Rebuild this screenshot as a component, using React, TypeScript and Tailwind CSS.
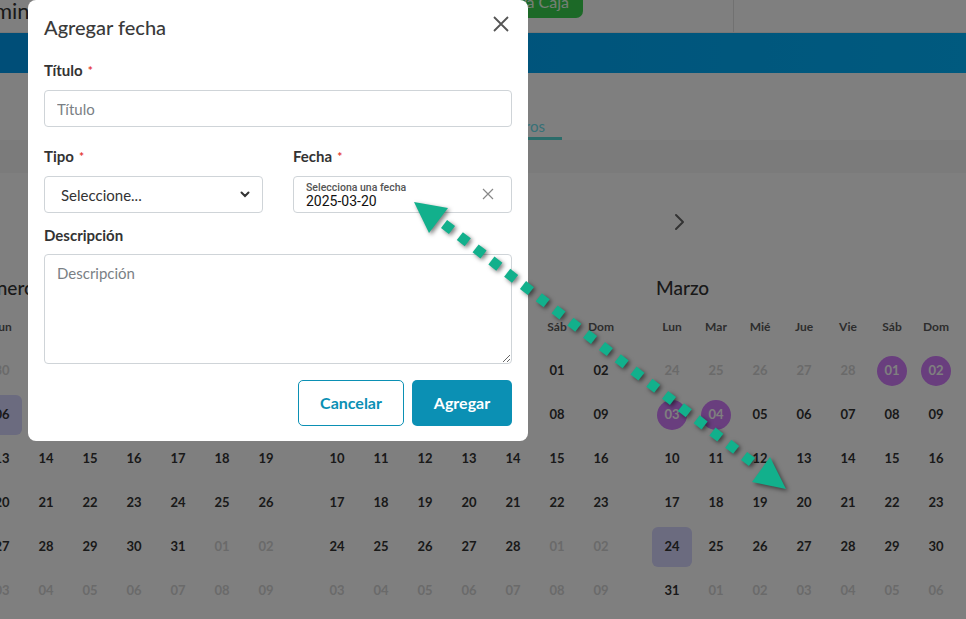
import React from "react";

type Cell = { d: number; muted: boolean };

function build(prev: number[], count: number, next: number): Cell[] {
  const cells: Cell[] = [];
  prev.forEach((d) => cells.push({ d, muted: true }));
  for (let i = 1; i <= count; i++) cells.push({ d: i, muted: false });
  for (let i = 1; i <= next; i++) cells.push({ d: i, muted: true });
  return cells;
}

const months = [
  { title: "Enero", cells: build([30, 31], 31, 9), squares: [6], circles: [] as number[] },
  { title: "Febrero", cells: build([27, 28, 29, 30, 31], 28, 9), squares: [] as number[], circles: [] as number[] },
  { title: "Marzo", cells: build([24, 25, 26, 27, 28], 31, 6), squares: [24], circles: [1, 2, 3, 4] },
];

const weekdays = ["Lun", "Mar", "Mié", "Jue", "Vie", "Sáb", "Dom"];

const pad = (n: number) => (n < 10 ? "0" + n : String(n));

function Month({ m }: { m: (typeof months)[number] }) {
  return (
    <div className="w-[308px] shrink-0">
      <div className="h-[35px] pl-[6px] text-[19px] leading-[35px] font-medium text-[#333]">{m.title}</div>
      <div className="grid grid-cols-7">
        {weekdays.map((w) => (
          <div key={w} className="h-[44px] flex items-center justify-center text-[12px] font-bold text-[#5a5a5a]">
            {w}
          </div>
        ))}
        {m.cells.map((c, i) => {
          const sq = !c.muted && m.squares.includes(c.d);
          const ci = !c.muted && m.circles.includes(c.d);
          return (
            <div key={i} className="h-[44px] flex items-center justify-center">
              {sq ? (
                <div className="w-[40px] h-[40px] rounded-[6px] bg-[#d6d6ff] flex items-center justify-center text-[13px] font-bold text-[#333]">
                  {pad(c.d)}
                </div>
              ) : ci ? (
                <div className="w-[30px] h-[30px] rounded-full bg-[#d27cfc] flex items-center justify-center text-[13px] font-bold text-white">
                  {pad(c.d)}
                </div>
              ) : (
                <span className={"text-[13px] font-bold " + (c.muted ? "text-[#d4d4d4]" : "text-[#333]")}>
                  {pad(c.d)}
                </span>
              )}
            </div>
          );
        })}
      </div>
    </div>
  );
}

function Page() {
  return (
    <div className="w-[966px]">
      <div className="h-[33px] flex items-start border-b border-[#eeeeee] overflow-hidden">
        <div className="flex-1 overflow-hidden">
          <div className="-ml-[33px] text-[22px] leading-none text-[#333] whitespace-nowrap">Administración</div>
        </div>
        <div className="-mt-[16px] h-[34px] px-[14px] rounded-b-[7px] rounded-t-[7px] bg-[#38d24e] text-[#eaffea] text-[16px] flex items-end pb-[8px] leading-none">
          Nueva Caja
        </div>
        <div className="w-[150px]" />
        <div className="w-[233px] h-[32px] border-l border-[#e2e2e2]" />
      </div>
      <div className="h-[40px] bg-gradient-to-r from-[#009cf0] to-[#00b4fe]" />
      <div className="h-[67px] flex items-end">
        <div className="w-[562px] flex justify-end">
          {["Feriados", "Eventos", "Otros"].map((t, i) => (
            <div
              key={t}
              className={
                "px-[17px] pb-[1px] text-[15px] leading-[20px] border-b-[3px] " +
                (i === 2 ? "border-[#56d8d4] text-[#6ee2ee]" : "border-transparent text-[#888]")
              }
            >
              {t}
            </div>
          ))}
        </div>
      </div>
      <div className="h-[33px] bg-[#f6f6f6]" />
      <div className="h-[97px] flex items-center pl-[674px]">
        <svg width="11" height="18" viewBox="0 0 11 18" fill="none">
          <path d="M2 2 L9 9 L2 16" stroke="#666" strokeWidth="2" strokeLinecap="round" strokeLinejoin="round" />
        </svg>
      </div>
      <div className="flex gap-[27px] -ml-[20px]">
        {months.map((m) => (
          <Month key={m.title} m={m} />
        ))}
      </div>
    </div>
  );
}

function Req() {
  return <span className="text-[#e53935] text-[12px] align-top ml-[5px] relative top-[1px]">*</span>;
}

function Modal() {
  return (
    <div className="absolute left-[28px] top-0 w-[500px] h-[441px] bg-white rounded-[8px] px-[16px] flex flex-col">
      <div className="h-[54px] flex items-center justify-between">
        <div className="text-[20px] font-medium text-[#3a3a3a] leading-none">Agregar fecha</div>
        <svg width="18" height="18" viewBox="0 0 18 18" className="mr-[2px] -mt-[6px]">
          <path d="M2 2 L16 16 M16 2 L2 16" stroke="#555" strokeWidth="1.8" />
        </svg>
      </div>
      <label className="mt-[6px] h-[20px] leading-[20px] text-[15px] font-bold text-[#333]">
        Título<Req />
      </label>
      <input
        placeholder="Título"
        className="mt-[10px] h-[37px] w-full border border-[#cfd4d8] rounded-[4px] pl-[12px] text-[15px] text-[#333] placeholder:text-[#7a7f85] outline-none"
      />
      <div className="mt-[19px] flex gap-[30px]">
        <div className="flex-1 flex flex-col">
          <label className="h-[20px] leading-[20px] text-[15px] font-bold text-[#333]">
            Tipo<Req />
          </label>
          <div className="mt-[10px] h-[37px] border border-[#cfd4d8] rounded-[4px] flex items-center justify-between pl-[16px] pr-[12px]">
            <span className="text-[15px] text-[#333] pt-[1px]">Seleccione...</span>
            <svg width="10" height="7" viewBox="0 0 10 7">
              <path d="M1.5 1.5 L5 5 L8.5 1.5" stroke="#333" strokeWidth="2" fill="none" strokeLinecap="round" />
            </svg>
          </div>
        </div>
        <div className="flex-1 flex flex-col">
          <label className="h-[20px] leading-[20px] text-[15px] font-bold text-[#333]">
            Fecha<Req />
          </label>
          <div className="mt-[10px] h-[37px] border border-[#cfd4d8] rounded-[4px] flex items-center justify-between pl-[12px] pr-[17px] font-['Roboto',sans-serif]">
            <div className="flex flex-col pt-[2px]">
              <span className="text-[10.5px] leading-[12px] text-[#555] font-medium">Selecciona una fecha</span>
              <span className="text-[14px] leading-[15px] text-[#111]">2025-03-20</span>
            </div>
            <svg width="12" height="12" viewBox="0 0 12 12" className="-mt-[2px]">
              <path d="M1 1 L11 11 M11 1 L1 11" stroke="#888" strokeWidth="1.2" />
            </svg>
          </div>
        </div>
      </div>
      <label className="mt-[12px] h-[20px] leading-[20px] text-[15px] font-bold text-[#333]">Descripción</label>
      <textarea
        placeholder="Descripción"
        className="mt-[9px] h-[110px] w-full border border-[#cfd4d8] rounded-[4px] pl-[12px] pt-[8px] text-[15px] leading-[20px] text-[#333] placeholder:text-[#7a7f85] outline-none"
      />
      <div className="mt-[16px] flex justify-end gap-[8px]">
        <button className="w-[106px] h-[46px] border border-[#0b90b4] rounded-[5px] text-[#0b90b4] text-[16px] font-bold">
          Cancelar
        </button>
        <button className="w-[100px] h-[46px] bg-[#0b90b4] rounded-[5px] text-white text-[16px] font-bold">
          Agregar
        </button>
      </div>
    </div>
  );
}

function Arrow() {
  const n = 20;
  const x0 = 448,
    y0 = 227,
    x1 = 748,
    y1 = 459;
  const angle = (Math.atan2(y1 - y0, x1 - x0) * 180) / Math.PI;
  const dots = Array.from({ length: n }, (_, i) => ({
    x: x0 + ((x1 - x0) * i) / (n - 1),
    y: y0 + ((y1 - y0) * i) / (n - 1),
  }));
  return (
    <svg
      className="absolute inset-0 pointer-events-none drop-shadow-[2px_2px_2px_rgba(0,0,0,0.5)]"
      width="966"
      height="619"
      viewBox="0 0 966 619"
    >
      <polygon points="414,202 448,208 429,233" fill="#12b08c" />
      {dots.map((d, i) => (
        <rect
          key={i}
          x={d.x - 5}
          y={d.y - 5}
          width="10"
          height="10"
          fill="#12b08c"
          transform={`rotate(${angle} ${d.x} ${d.y})`}
        />
      ))}
      <polygon points="752,482 770,457 786,489" fill="#12b08c" />
    </svg>
  );
}

export default function App() {
  return (
    <div className="relative w-[966px] h-[619px] overflow-hidden bg-white font-['Lato',sans-serif]">
      <Page />
      <div className="absolute inset-0 bg-black/50" />
      <Modal />
      <Arrow />
    </div>
  );
}
